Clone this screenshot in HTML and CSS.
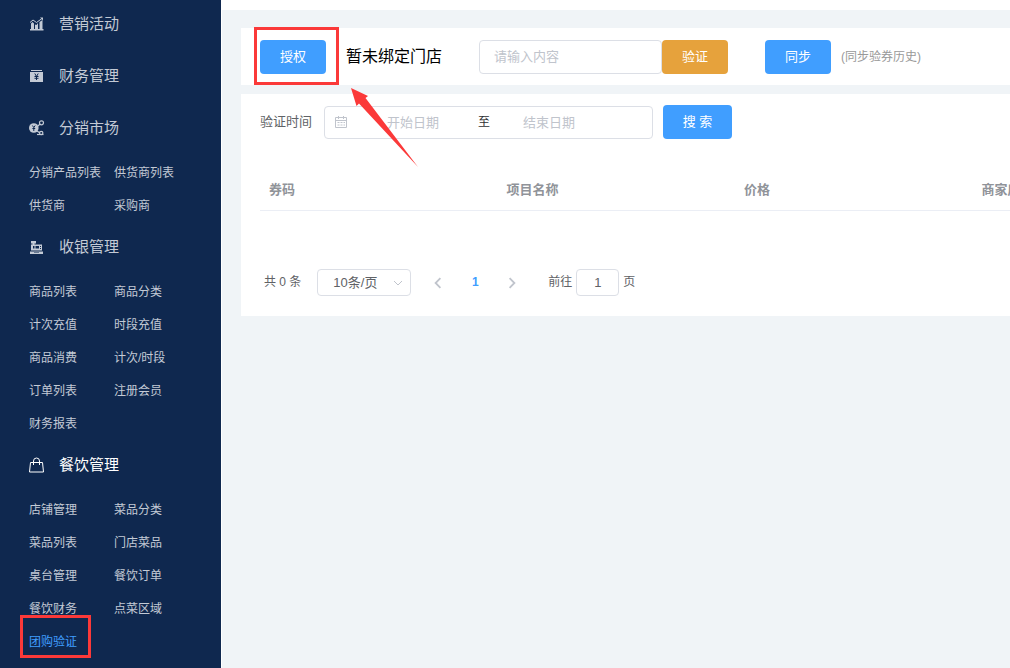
FILE: index.html
```html
<!DOCTYPE html>
<html lang="zh-CN">
<head>
<meta charset="utf-8">
<title>团购验证</title>
<link rel="stylesheet" href="styles.css">
</head>
<body>
<div class="app">
  <nav class="sidebar">
    <section class="group">
      <h2 class="group-title">
        <svg class="icon" viewBox="0 0 16 16" fill="currentColor"><path d="M1 13h13.500v1.500H1zM2 7.500 3.500 6 5 7.500V13H2zM6 8.500 7.500 9 9 7v6H6zM10.500 6 13.500 4v9h-3z"/><path d="M1 6.500 4 4l3.500 2.500L13 2.500" fill="none" stroke="currentColor"/><path d="M11 1.500h3v3z"/></svg>
        营销活动
      </h2>
    </section>
    <section class="group">
      <h2 class="group-title">
        <svg class="icon" viewBox="0 0 16 16"><path fill="currentColor" d="M2 2h11v1H2zM1 4h13v10H1z"/><path d="m5.800 5.500 1.700 3 1.700-3M7.500 8v4M5.500 8.500h4M5.500 10.300h4" fill="none" stroke="#0f284f"/></svg>
        财务管理
      </h2>
    </section>
    <section class="group">
      <h2 class="group-title">
        <svg class="icon" viewBox="0 0 16 16"><circle cx="4.800" cy="8" r="4.800" fill="currentColor"/><path d="m3.400 5.500 1.400 2 1.400-2M4.800 7.500V11M3.400 8.500h2.800" fill="none" stroke="#0f284f"/><g fill="none" stroke="currentColor" stroke-width="1.200"><circle cx="12.500" cy="2.800" r="2"/><path d="m9 6 2-2M8 11l3 2"/><circle cx="12.200" cy="13" r="1.700"/><path d="M8 14.500h6.500"/></g></svg>
        分销市场
      </h2>
      <ul class="links">
        <li><a href="#">分销产品列表</a></li><li><a href="#">供货商列表</a></li>
        <li><a href="#">供货商</a></li><li><a href="#">采购商</a></li>
      </ul>
    </section>
    <section class="group">
      <h2 class="group-title">
        <svg class="icon" viewBox="0 0 16 16"><path fill="currentColor" d="M2 2h5v2.500H5.500V5.500h7.500v6H2v-6h1.500v-1H2zM1 12.500h13V15H1z"/><path fill="#0f284f" d="M4 7h1.500v2.500H4zM6.500 7H10v2.500H6.500zM11 7h1v1h-1zM11 9h1v1h-1zM5 13.500h5v.6H5z"/></svg>
        收银管理
      </h2>
      <ul class="links">
        <li><a href="#">商品列表</a></li><li><a href="#">商品分类</a></li>
        <li><a href="#">计次充值</a></li><li><a href="#">时段充值</a></li>
        <li><a href="#">商品消费</a></li><li><a href="#">计次/时段</a></li>
        <li><a href="#">订单列表</a></li><li><a href="#">注册会员</a></li>
        <li><a href="#">财务报表</a></li>
      </ul>
    </section>
    <section class="group">
      <h2 class="group-title current">
        <svg class="icon" viewBox="0 0 16 16" fill="none" stroke="currentColor"><path d="M1.500 5.500h12l1 9.500H.5zM4.500 8V4a3 3 0 0 1 6 0v4"/></svg>
        餐饮管理
      </h2>
      <ul class="links">
        <li><a href="#">店铺管理</a></li><li><a href="#">菜品分类</a></li>
        <li><a href="#">菜品列表</a></li><li><a href="#">门店菜品</a></li>
        <li><a href="#">桌台管理</a></li><li><a href="#">餐饮订单</a></li>
        <li><a href="#">餐饮财务</a></li><li><a href="#">点菜区域</a></li>
        <li><a class="active" href="#">团购验证</a></li>
      </ul>
    </section>
  </nav>

  <div class="page">
    <header class="topbar"></header>
    <main class="content">
      <section class="card verify">
        <button class="btn primary" type="button">授权</button>
        <span class="store">暂未绑定门店</span>
        <input class="field code" type="text" placeholder="请输入内容" aria-label="券码">
        <button class="btn warning" type="button">验证</button>
        <button class="btn primary sync" type="button">同步</button>
        <a class="history" href="#">(同步验券历史)</a>
      </section>

      <section class="card records">
        <form class="search">
          <label class="search-label" for="start">验证时间</label>
          <div class="field range">
            <svg class="calendar" viewBox="0 0 14 14" fill="none" stroke="currentColor"><path d="M1.500 2.500h11v10h-11zM1.500 5.500h11M4.500 1v3M9.500 1v3M3.500 7.500h2M6.500 7.500h2M9.500 7.500h1.500M3.500 10h2M6.500 10h2M9.500 10h1.500"/></svg>
            <input class="date" id="start" type="text" placeholder="开始日期">
            <span class="to">至</span>
            <input class="date date-end" type="text" placeholder="结束日期" aria-label="结束日期">
          </div>
          <button class="btn primary submit" type="button">搜 索</button>
        </form>

        <table class="table">
          <thead><tr><th>券码</th><th>项目名称</th><th>价格</th><th>商家店铺</th></tr></thead>
        </table>

        <div class="pager">
          <span>共 0 条</span>
          <div class="size">
            <select class="field size-select" aria-label="每页条数"><option>10条/页</option></select>
            <svg class="caret" viewBox="0 0 10 10" fill="none" stroke="currentColor"><path d="m1 3 4 4 4-4"/></svg>
          </div>
          <button class="step" type="button" aria-label="上一页"><svg viewBox="0 0 10 10" fill="none" stroke="currentColor" stroke-width="1.500"><path d="M7 1 3 5l4 4"/></svg></button>
          <button class="step number" type="button">1</button>
          <button class="step" type="button" aria-label="下一页"><svg viewBox="0 0 10 10" fill="none" stroke="currentColor" stroke-width="1.500"><path d="m3 1 4 4-4 4"/></svg></button>
          <label class="jump">前往<input class="field jump-input" type="text" value="1">页</label>
        </div>
      </section>
    </main>
  </div>

  <div class="mark mark-auth"></div>
  <div class="mark mark-menu"></div>
  <svg class="arrow" viewBox="0 0 67 79"><path fill="#fb3939" d="M0 0 17 8 14.500 10 67 79 8 15.500 5.500 18z"/></svg>
</div>
</body>
</html>
```
FILE: styles.css
```css
* { box-sizing: border-box; }

body {
  margin: 0;
  background: #f0f4f7;
  color: #606266;
  font: 13px/20px "Liberation Sans", "Noto Sans CJK SC", sans-serif;
}

button, input, select { font: inherit; }
a { color: inherit; text-decoration: none; }

.app {
  position: relative;
  display: flex;
  height: 100vh;
  overflow: hidden;
}

/* Sidebar */
.sidebar {
  flex: none;
  width: 221px;
  overflow: hidden;
  background: #0f284f;
  color: #c3cad5;
}
.group:first-child { margin-top: -2px; }
.group-title {
  display: flex;
  align-items: center;
  gap: 14px;
  height: 52px;
  margin: 0;
  padding-left: 29px;
  font-size: 15px;
  font-weight: 400;
}
.group-title.current { color: #fff; }
.icon { flex: none; width: 16px; height: 16px; }
.links {
  display: grid;
  grid-template-columns: 85px 85px;
  grid-auto-rows: 33px;
  margin: 0 0 -2px;
  padding: 3px 0 0 29px;
  list-style: none;
  font-size: 12px;
  line-height: 33px;
  white-space: nowrap;
}
.links .active { color: #409eff; }

/* Page */
.page {
  flex: 1;
  min-width: 0;
  border-left: 1px solid #fff;
}
.topbar { height: 10px; background: #fff; }
.content {
  display: flex;
  flex-direction: column;
  gap: 9px;
  padding: 18px 0 0 19px;
}
.card { overflow: hidden; padding-left: 19px; background: #fff; }

.btn {
  flex: none;
  width: 66px;
  height: 34px;
  padding: 0;
  border: 0;
  border-radius: 4px;
  color: #fff;
}
.primary { background: #409eff; }
.warning { background: #e6a23c; }
.field {
  border: 1px solid #dcdfe6;
  border-radius: 4px;
  background: #fff;
  color: #606266;
}
::placeholder { color: #c0c4cc; opacity: 1; }

.verify {
  display: flex;
  align-items: center;
  height: 57px;
  white-space: nowrap;
}
.store { width: 153px; padding-left: 20px; color: #000; font-size: 16px; }
.code { width: 183px; height: 34px; padding: 0 14px; }
.sync { margin-left: 37px; }
.history { padding-left: 10px; color: #999; font-size: 12px; }

.records { padding-top: 11px; padding-bottom: 20px; }
.search { display: flex; align-items: center; }
.search-label { width: 64px; }
.range {
  display: flex;
  align-items: center;
  width: 329px;
  height: 33px;
  padding-left: 9px;
}
.calendar { width: 14px; height: 14px; color: #c0c4cc; }
.date {
  width: 130px;
  padding: 2px 0 0;
  border: 0;
  background: none;
  text-align: center;
}
.date-end { width: 118px; }
.to { width: 12px; color: #303133; font-size: 12px; }
.submit { width: 69px; margin-left: 10px; }

.table {
  width: 950px;
  margin-top: 30px;
  border-collapse: collapse;
  table-layout: fixed;
}
.table th {
  height: 41px;
  padding: 2px 9px 0;
  border-bottom: 1px solid #ebeef5;
  color: #909399;
  font-weight: 700;
  text-align: left;
}

.pager {
  display: flex;
  align-items: center;
  margin-top: 58px;
  padding-left: 4px;
  font-size: 12px;
}
.size {
  position: relative;
  width: 94px;
  margin: 0 12px 0 16px;
}
.size-select {
  display: block;
  width: 100%;
  height: 27px;
  padding: 2px 15px 0;
  appearance: none;
  font-size: 13px;
}
.caret {
  position: absolute;
  top: 9px;
  right: 8px;
  width: 10px;
  height: 10px;
  color: #c0c4cc;
}
.step {
  width: 30px;
  height: 27px;
  margin-right: 7px;
  padding: 0;
  border: 0;
  background: none;
  color: #c0c4cc;
}
.step svg { width: 12px; height: 12px; vertical-align: middle; }
.number { color: #409eff; font-weight: 700; }
.jump { display: flex; align-items: center; gap: 4px; padding-left: 14px; }
.jump-input {
  width: 43px;
  height: 27px;
  padding: 0;
  font-size: 13px;
  text-align: center;
}

/* Annotations over the page */
.mark { position: absolute; border: 3px solid #fb3939; pointer-events: none; }
.mark-auth { left: 254px; top: 27px; width: 85px; height: 58px; }
.mark-menu { left: 20px; top: 615px; width: 71px; height: 43px; }
.arrow {
  position: absolute;
  left: 351px;
  top: 88px;
  width: 67px;
  height: 79px;
  pointer-events: none;
}
```
